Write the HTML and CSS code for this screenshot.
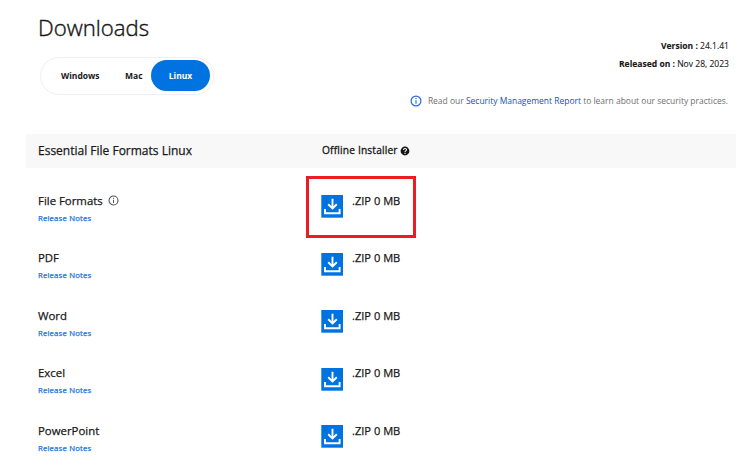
FILE: index.html
```html
<!DOCTYPE html>
<html lang="en">
<head>
<meta charset="utf-8">
<title>Downloads</title>
<link rel="stylesheet" href="styles.css">
</head>
<body>
<svg class="defs" width="0" height="0" aria-hidden="true">
  <symbol id="info" viewBox="0 0 12 12">
    <circle cx="6" cy="6" r="4.9" fill="none" stroke="currentColor" stroke-width="1.2"/>
    <path d="M6 5.2V8.8M6 3.1V4.2" stroke="currentColor" stroke-width="1.1"/>
  </symbol>
  <symbol id="download" viewBox="0 0 22 23">
    <path fill="#0073e0" d="M0.3 0H22V22.7H0.3Z"/>
    <path fill="none" stroke="#fff" stroke-width="1.9" d="M11.5 3.8V13M7.2 9.3L11.5 13.4L15.8 9.3M4 14V18.2H18.6V14"/>
  </symbol>
</svg>
<main class="page">
  <header class="top">
    <div class="intro">
      <h1 class="title">Downloads</h1>
      <nav class="tabs">
        <a class="tab windows"><span>Windows</span></a>
        <a class="tab mac"><span>Mac</span></a>
        <a class="tab active"><span>Linux</span></a>
      </nav>
    </div>
    <div class="meta">
      <p class="version"><b>Version :</b> 24.1.41</p>
      <p class="released"><b>Released on :</b> Nov 28, 2023</p>
      <p class="security"><svg class="security-icon"><use href="#info"/></svg><span class="security-text">Read our <a>Security Management Report</a> to learn about our security practices.</span></p>
    </div>
  </header>
  <div class="band">
    <h2 class="band-title"><span>Essential File Formats Linux</span></h2>
    <div class="band-installer"><span>Offline Installer</span>
      <svg class="help" viewBox="0 0 10 10"><circle cx="5" cy="5" r="4.4" fill="#181818"/><path d="M3.5 3.9C3.6 2 6.5 2.1 6.5 3.8C6.5 4.9 5 4.8 5 5.9M5 6.8V7.9" fill="none" stroke="#fff" stroke-width="1.1"/></svg>
    </div>
  </div>
  <div class="rows">
    <section class="row">
      <div class="product"><h3 class="name"><span>File Formats</span><svg class="name-icon"><use href="#info"/></svg></h3><a class="notes">Release Notes</a></div>
      <div class="file"><svg class="download"><use href="#download"/></svg><span class="size">.ZIP 0 MB</span><div class="highlight"></div></div>
    </section>
    <section class="row">
      <div class="product"><h3 class="name"><span>PDF</span></h3><a class="notes">Release Notes</a></div>
      <div class="file"><svg class="download"><use href="#download"/></svg><span class="size">.ZIP 0 MB</span></div>
    </section>
    <section class="row">
      <div class="product"><h3 class="name"><span>Word</span></h3><a class="notes">Release Notes</a></div>
      <div class="file"><svg class="download"><use href="#download"/></svg><span class="size">.ZIP 0 MB</span></div>
    </section>
    <section class="row">
      <div class="product"><h3 class="name"><span>Excel</span></h3><a class="notes">Release Notes</a></div>
      <div class="file"><svg class="download"><use href="#download"/></svg><span class="size">.ZIP 0 MB</span></div>
    </section>
    <section class="row">
      <div class="product"><h3 class="name"><span>PowerPoint</span></h3><a class="notes">Release Notes</a></div>
      <div class="file"><svg class="download"><use href="#download"/></svg><span class="size">.ZIP 0 MB</span></div>
    </section>
  </div>
</main>
</body>
</html>
```
FILE: styles.css
```css
* { box-sizing: border-box; }
body {
  margin: 0;
  height: 475px;
  overflow: hidden;
  background: #fff;
  color: #181818;
  font-family: "Open Sans", "Noto Sans", sans-serif;
}
h1, h2, h3, p { margin: 0; font-weight: 400; }
svg { flex: none; }
.defs { position: absolute; }
.page { width: 736px; padding-left: 26px; }
.top { display: flex; justify-content: space-between; height: 134px; padding-right: 7px; }
.intro { padding: 13px 0 0 12px; }
.title { font-size: 22.2px; font-weight: 300; line-height: 30px; -webkit-text-stroke: 0.4px; }
.tabs {
  display: flex;
  width: 174px;
  height: 38px;
  margin: 14px 0 0 2px;
  padding: 2px 3px 3px 20px;
  border: 1px solid #edf0fa;
  border-radius: 19px;
}
.tab { font-size: 8.5px; font-weight: 700; line-height: 31px; white-space: nowrap; }
.windows { width: 64px; }
.mac { width: 26px; }
.active {
  width: 59px;
  height: 31px;
  border-radius: 16px;
  background: #0073e0;
  color: #fff;
  text-align: center;
}
.meta { padding-top: 37px; font-size: 8.55px; text-align: right; white-space: nowrap; }
.meta b { font-weight: 700; }
.version, .released { line-height: 18px; -webkit-text-stroke: 0.1px; }
.version { height: 18px; }
.security {
  display: flex;
  justify-content: flex-end;
  align-items: center;
  gap: 6px;
  height: 18px;
  margin-top: 18px;
  padding-right: 1px;
  font-size: 8.47px;
  color: #6f6f6f;
}
.security a { color: #1450c8; }
.security-icon { width: 12px; height: 12px; margin-top: 1px; color: #2468f2; }
.band {
  display: flex;
  align-items: center;
  height: 34px;
  padding: 0 0 2px 12px;
  background: #f8f8f8;
}
.band-title { width: 284px; font-size: 12px; -webkit-text-stroke: 0.25px; }
.band-installer { display: flex; align-items: center; gap: 2px; font-size: 10.2px; letter-spacing: 0.17px; -webkit-text-stroke: 0.3px; }
.help { width: 10px; height: 10px; margin-top: 1px; }
.rows { padding: 23.9px 0 0 12px; }
.row { display: flex; height: 57.5px; }
.product { width: 283px; }
.name { display: flex; align-items: center; gap: 5px; height: 18px; font-size: 11.4px; line-height: 18px; -webkit-text-stroke: 0.25px; }
.name-icon { width: 11px; height: 11px; color: #555; }
.notes { display: block; font-size: 7.7px; letter-spacing: 0.2px; line-height: 17px; color: #1a73d9; -webkit-text-stroke: 0.25px; }
.file { position: relative; display: flex; gap: 9px; }
.download { width: 22px; height: 23px; margin-top: 3.3px; }
.size { font-size: 11.1px; line-height: 18px; -webkit-text-stroke: 0.25px; }
.highlight {
  position: absolute;
  left: -15px;
  top: -16px;
  width: 110px;
  height: 62px;
  border: 3px solid #ed1c24;
}
```
